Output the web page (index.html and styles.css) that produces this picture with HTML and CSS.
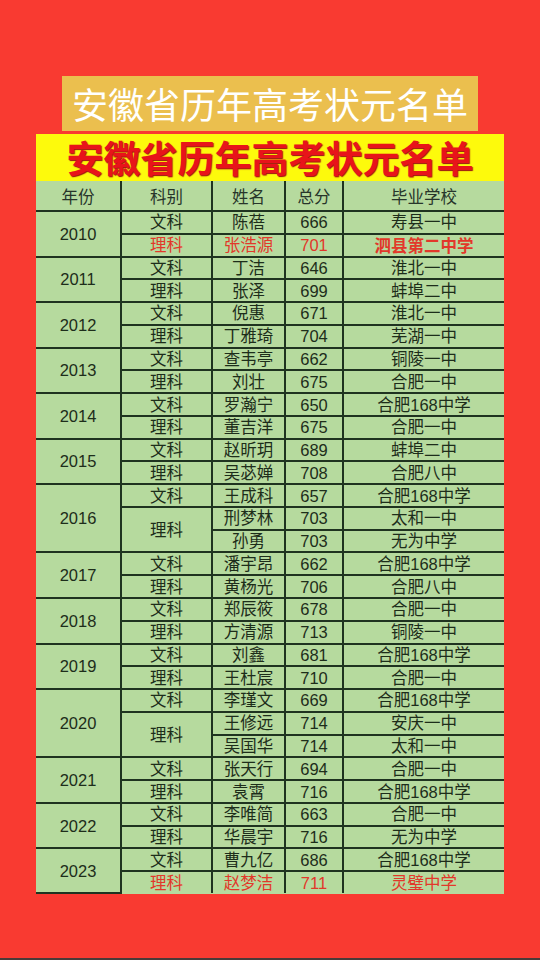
FILE: index.html
```html
<!DOCTYPE html>
<html lang="zh-CN">
<head>
<meta charset="utf-8">
<title>安徽省历年高考状元名单</title>
<link rel="stylesheet" href="styles.css">
</head>
<body>
<div class="page">
  <div class="top-title">安徽省历年高考状元名单</div>
  <div class="sheet">
    <div class="band">安徽省历年高考状元名单</div>
    <table class="list">
      <colgroup>
        <col class="c-year"><col class="c-sub"><col class="c-name"><col class="c-score"><col class="c-school">
      </colgroup>
      <thead>
        <tr><th>年份</th><th>科别</th><th>姓名</th><th>总分</th><th>毕业学校</th></tr>
      </thead>
      <tbody>
        <tr><td rowspan="2">2010</td><td>文科</td><td>陈蓓</td><td>666</td><td>寿县一中</td></tr>
        <tr class="red"><td>理科</td><td>张浩源</td><td>701</td><td class="strong">泗县第二中学</td></tr>
        <tr><td rowspan="2">2011</td><td>文科</td><td>丁洁</td><td>646</td><td>淮北一中</td></tr>
        <tr><td>理科</td><td>张泽</td><td>699</td><td>蚌埠二中</td></tr>
        <tr><td rowspan="2">2012</td><td>文科</td><td>倪惠</td><td>671</td><td>淮北一中</td></tr>
        <tr><td>理科</td><td>丁雅琦</td><td>704</td><td>芜湖一中</td></tr>
        <tr><td rowspan="2">2013</td><td>文科</td><td>查韦亭</td><td>662</td><td>铜陵一中</td></tr>
        <tr><td>理科</td><td>刘壮</td><td>675</td><td>合肥一中</td></tr>
        <tr><td rowspan="2">2014</td><td>文科</td><td>罗瀚宁</td><td>650</td><td>合肥168中学</td></tr>
        <tr><td>理科</td><td>董吉洋</td><td>675</td><td>合肥一中</td></tr>
        <tr><td rowspan="2">2015</td><td>文科</td><td>赵昕玥</td><td>689</td><td>蚌埠二中</td></tr>
        <tr><td>理科</td><td>吴苾婵</td><td>708</td><td>合肥八中</td></tr>
        <tr><td rowspan="3">2016</td><td>文科</td><td>王成科</td><td>657</td><td>合肥168中学</td></tr>
        <tr><td rowspan="2">理科</td><td>刑梦林</td><td>703</td><td>太和一中</td></tr>
        <tr><td>孙勇</td><td>703</td><td>无为中学</td></tr>
        <tr><td rowspan="2">2017</td><td>文科</td><td>潘宇昂</td><td>662</td><td>合肥168中学</td></tr>
        <tr><td>理科</td><td>黄杨光</td><td>706</td><td>合肥八中</td></tr>
        <tr><td rowspan="2">2018</td><td>文科</td><td>郑辰筱</td><td>678</td><td>合肥一中</td></tr>
        <tr><td>理科</td><td>方清源</td><td>713</td><td>铜陵一中</td></tr>
        <tr><td rowspan="2">2019</td><td>文科</td><td>刘鑫</td><td>681</td><td>合肥168中学</td></tr>
        <tr><td>理科</td><td>王杜宸</td><td>710</td><td>合肥一中</td></tr>
        <tr><td rowspan="3">2020</td><td>文科</td><td>李瑾文</td><td>669</td><td>合肥168中学</td></tr>
        <tr><td rowspan="2">理科</td><td>王修远</td><td>714</td><td>安庆一中</td></tr>
        <tr><td>吴国华</td><td>714</td><td>太和一中</td></tr>
        <tr><td rowspan="2">2021</td><td>文科</td><td>张天行</td><td>694</td><td>合肥一中</td></tr>
        <tr><td>理科</td><td>袁霄</td><td>716</td><td>合肥168中学</td></tr>
        <tr><td rowspan="2">2022</td><td>文科</td><td>李唯简</td><td>663</td><td>合肥一中</td></tr>
        <tr><td>理科</td><td>华晨宇</td><td>716</td><td>无为中学</td></tr>
        <tr><td rowspan="2">2023</td><td>文科</td><td>曹九亿</td><td>686</td><td>合肥168中学</td></tr>
        <tr class="red"><td>理科</td><td>赵梦洁</td><td>711</td><td>灵璧中学</td></tr>
      </tbody>
    </table>
  </div>
  <div class="spacer"></div>
  <div class="bottom-line"></div>
</div>
</body>
</html>
```
FILE: styles.css
```css
html, body {
  margin: 0;
  padding: 0;
}
body {
  background: #f93a31;
  font-family: "Liberation Sans", "Noto Sans CJK SC", sans-serif;
}
.page {
  width: 540px;
  height: 960px;
  display: flex;
  flex-direction: column;
  align-items: center;
  padding-top: 76px;
  box-sizing: border-box;
}
.top-title {
  width: 416px;
  height: 55px;
  background: #ebbf4e;
  color: #ffffff;
  font-family: "Noto Sans CJK SC", sans-serif;
  font-size: 36px;
  line-height: 55px;
  text-align: center;
  white-space: nowrap;
}
.sheet {
  margin-top: 3px;
  width: 468px;
  display: flex;
  flex-direction: column;
}
.band {
  height: 47px;
  background: #fdfa0c;
  color: #e8141a;
  font-family: "Noto Sans CJK SC", sans-serif;
  font-weight: 700;
  font-size: 37px;
  line-height: 46px;
  text-align: center;
  white-space: nowrap;
  text-shadow: 1px 1px 1px #9a1010;
}
.list {
  width: 468px;
  border-collapse: collapse;
  table-layout: fixed;
  background: #b6da9e;
  color: #1d2d1a;
  font-size: 16.5px;
}
.c-year { width: 85px; }
.c-sub { width: 91px; }
.c-name { width: 73px; }
.c-score { width: 58px; }
.c-school { width: 161px; }
.list th, .list td {
  border: 2px solid #1f3320;
  text-align: center;
  padding: 0;
  font-weight: 400;
  white-space: nowrap;
}
.list th {
  height: 29px;
  border-top: 0;
  color: #27352a;
}
.list td {
  height: 20.78px;
  line-height: 20px;
}
.list th:first-child,
.list td[rowspan="2"]:first-child,
.list td[rowspan="3"]:first-child {
  border-left: 0;
}
.list th:last-child, .list td:last-child {
  border-right: 0;
}
.list tbody tr:last-child td {
  border-bottom: 0;
}
.list tr.red td {
  color: #e2382a;
}
.list td.strong {
  color: #e12a20;
  font-weight: 700;
  font-family: "Noto Sans CJK SC", serif;
}
.spacer {
  flex: 1;
}
.bottom-line {
  width: 540px;
  height: 2px;
  background: #4a3a38;
}
```
